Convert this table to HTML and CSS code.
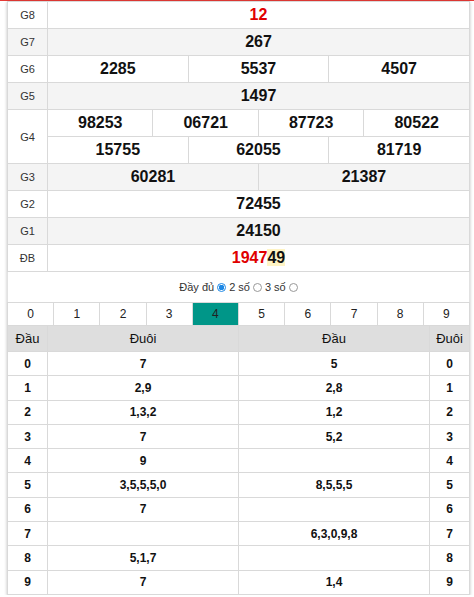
FILE: index.html
```html
<!DOCTYPE html>
<html lang="vi">
<head>
<meta charset="utf-8">
<title>Kết quả xổ số</title>
<link rel="stylesheet" href="styles.css">
</head>
<body>
<div class="topbar"></div>
<div class="box">
  <table class="prizes">
    <colgroup>
      <col class="c-label">
      <col><col><col><col><col><col><col><col><col><col><col><col>
    </colgroup>
    <tr class="odd"><td class="lbl">G8</td><td colspan="12" class="num red">12</td></tr>
    <tr class="even"><td class="lbl">G7</td><td colspan="12" class="num">267</td></tr>
    <tr class="odd"><td class="lbl">G6</td><td colspan="4" class="num">2285</td><td colspan="4" class="num">5537</td><td colspan="4" class="num">4507</td></tr>
    <tr class="even"><td class="lbl">G5</td><td colspan="12" class="num">1497</td></tr>
    <tr class="odd"><td class="lbl" rowspan="2">G4</td><td colspan="3" class="num">98253</td><td colspan="3" class="num">06721</td><td colspan="3" class="num">87723</td><td colspan="3" class="num">80522</td></tr>
    <tr class="odd"><td colspan="4" class="num">15755</td><td colspan="4" class="num">62055</td><td colspan="4" class="num">81719</td></tr>
    <tr class="even"><td class="lbl">G3</td><td colspan="6" class="num">60281</td><td colspan="6" class="num">21387</td></tr>
    <tr class="odd"><td class="lbl">G2</td><td colspan="12" class="num">72455</td></tr>
    <tr class="even"><td class="lbl">G1</td><td colspan="12" class="num">24150</td></tr>
    <tr class="odd"><td class="lbl">ĐB</td><td colspan="12" class="num"><span class="red">1947</span><span class="hl">49</span></td></tr>
  </table>

  <div class="options">
    <span>Đầy đủ</span><span class="radio on"></span>
    <span>2 số</span><span class="radio"></span>
    <span>3 số</span><span class="radio"></span>
  </div>

  <div class="tabs">
    <div class="tab">0</div><div class="tab">1</div><div class="tab">2</div><div class="tab">3</div><div class="tab active">4</div>
    <div class="tab">5</div><div class="tab">6</div><div class="tab">7</div><div class="tab">8</div><div class="tab">9</div>
  </div>

  <table class="loto">
    <colgroup><col class="c-side"><col><col><col class="c-side"></colgroup>
    <tr class="head"><th>Đầu</th><th>Đuôi</th><th>Đầu</th><th>Đuôi</th></tr>
    <tr><td>0</td><td>7</td><td>5</td><td>0</td></tr>
    <tr><td>1</td><td>2,9</td><td>2,8</td><td>1</td></tr>
    <tr><td>2</td><td>1,3,2</td><td>1,2</td><td>2</td></tr>
    <tr><td>3</td><td>7</td><td>5,2</td><td>3</td></tr>
    <tr><td>4</td><td>9</td><td></td><td>4</td></tr>
    <tr><td>5</td><td>3,5,5,5,0</td><td>8,5,5,5</td><td>5</td></tr>
    <tr><td>6</td><td>7</td><td></td><td>6</td></tr>
    <tr><td>7</td><td></td><td>6,3,0,9,8</td><td>7</td></tr>
    <tr><td>8</td><td>5,1,7</td><td></td><td>8</td></tr>
    <tr><td>9</td><td>7</td><td>1,4</td><td>9</td></tr>
  </table>
</div>
</body>
</html>
```

FILE: styles.css
```css
html, body {
  margin: 0;
  padding: 0;
  background: #fff;
  font-family: "Liberation Sans", Arial, sans-serif;
  color: #111;
}

.topbar {
  height: 1px;
  background: #e53935;
}

.box {
  width: 463px;
  margin-left: 7px;
  box-shadow: 0 1px 3px rgba(0, 0, 0, 0.25);
}

table {
  border-collapse: collapse;
  table-layout: fixed;
  width: 100%;
}

.c-label, .c-side { width: 40px; }

.prizes td {
  border: 1px solid #d9d9d9;
  height: 26px;
  padding: 0;
  text-align: center;
  vertical-align: middle;
}

.prizes tr.even td { background: #f4f4f4; }
.prizes tr.odd td { background: #fff; }

.lbl {
  font-size: 11px;
  color: #333;
}

.num {
  font-size: 16px;
  font-weight: bold;
  color: #111;
}

.red { color: #e00000; }

.hl {
  background: #fff4c4;
  color: #111;
}

.options {
  height: 30px;
  display: flex;
  align-items: center;
  justify-content: center;
  font-size: 11px;
  color: #333;
  gap: 0;
  border-left: 1px solid #e2e2e2;
  border-right: 1px solid #e2e2e2;
  box-sizing: border-box;
}

.options span + span { margin-left: 3px; }

.radio {
  width: 9px;
  height: 9px;
  border: 1px solid #999;
  border-radius: 50%;
  box-sizing: border-box;
  background: #fff;
  display: inline-block;
}

.radio.on {
  border-color: #1e88e5;
  background: radial-gradient(circle, #1e88e5 0 2.6px, #fff 3px);
}

.tabs {
  display: grid;
  grid-template-columns: repeat(10, 1fr);
  border-top: 1px solid #d9d9d9;
  border-left: 1px solid #d9d9d9;
}

.tab {
  height: 22px;
  line-height: 22px;
  text-align: center;
  font-size: 12px;
  color: #222;
  border-right: 1px solid #d9d9d9;
}

.tab.active { background: #009688; }

.loto th, .loto td {
  border: 1px solid #d9d9d9;
  padding: 0;
  text-align: center;
  vertical-align: middle;
}

.loto th {
  background: #dedede;
  font-size: 13px;
  font-weight: normal;
  height: 25px;
  color: #111;
}

.loto td {
  height: 23.3px;
  font-size: 12px;
  font-weight: bold;
  color: #111;
}
```
